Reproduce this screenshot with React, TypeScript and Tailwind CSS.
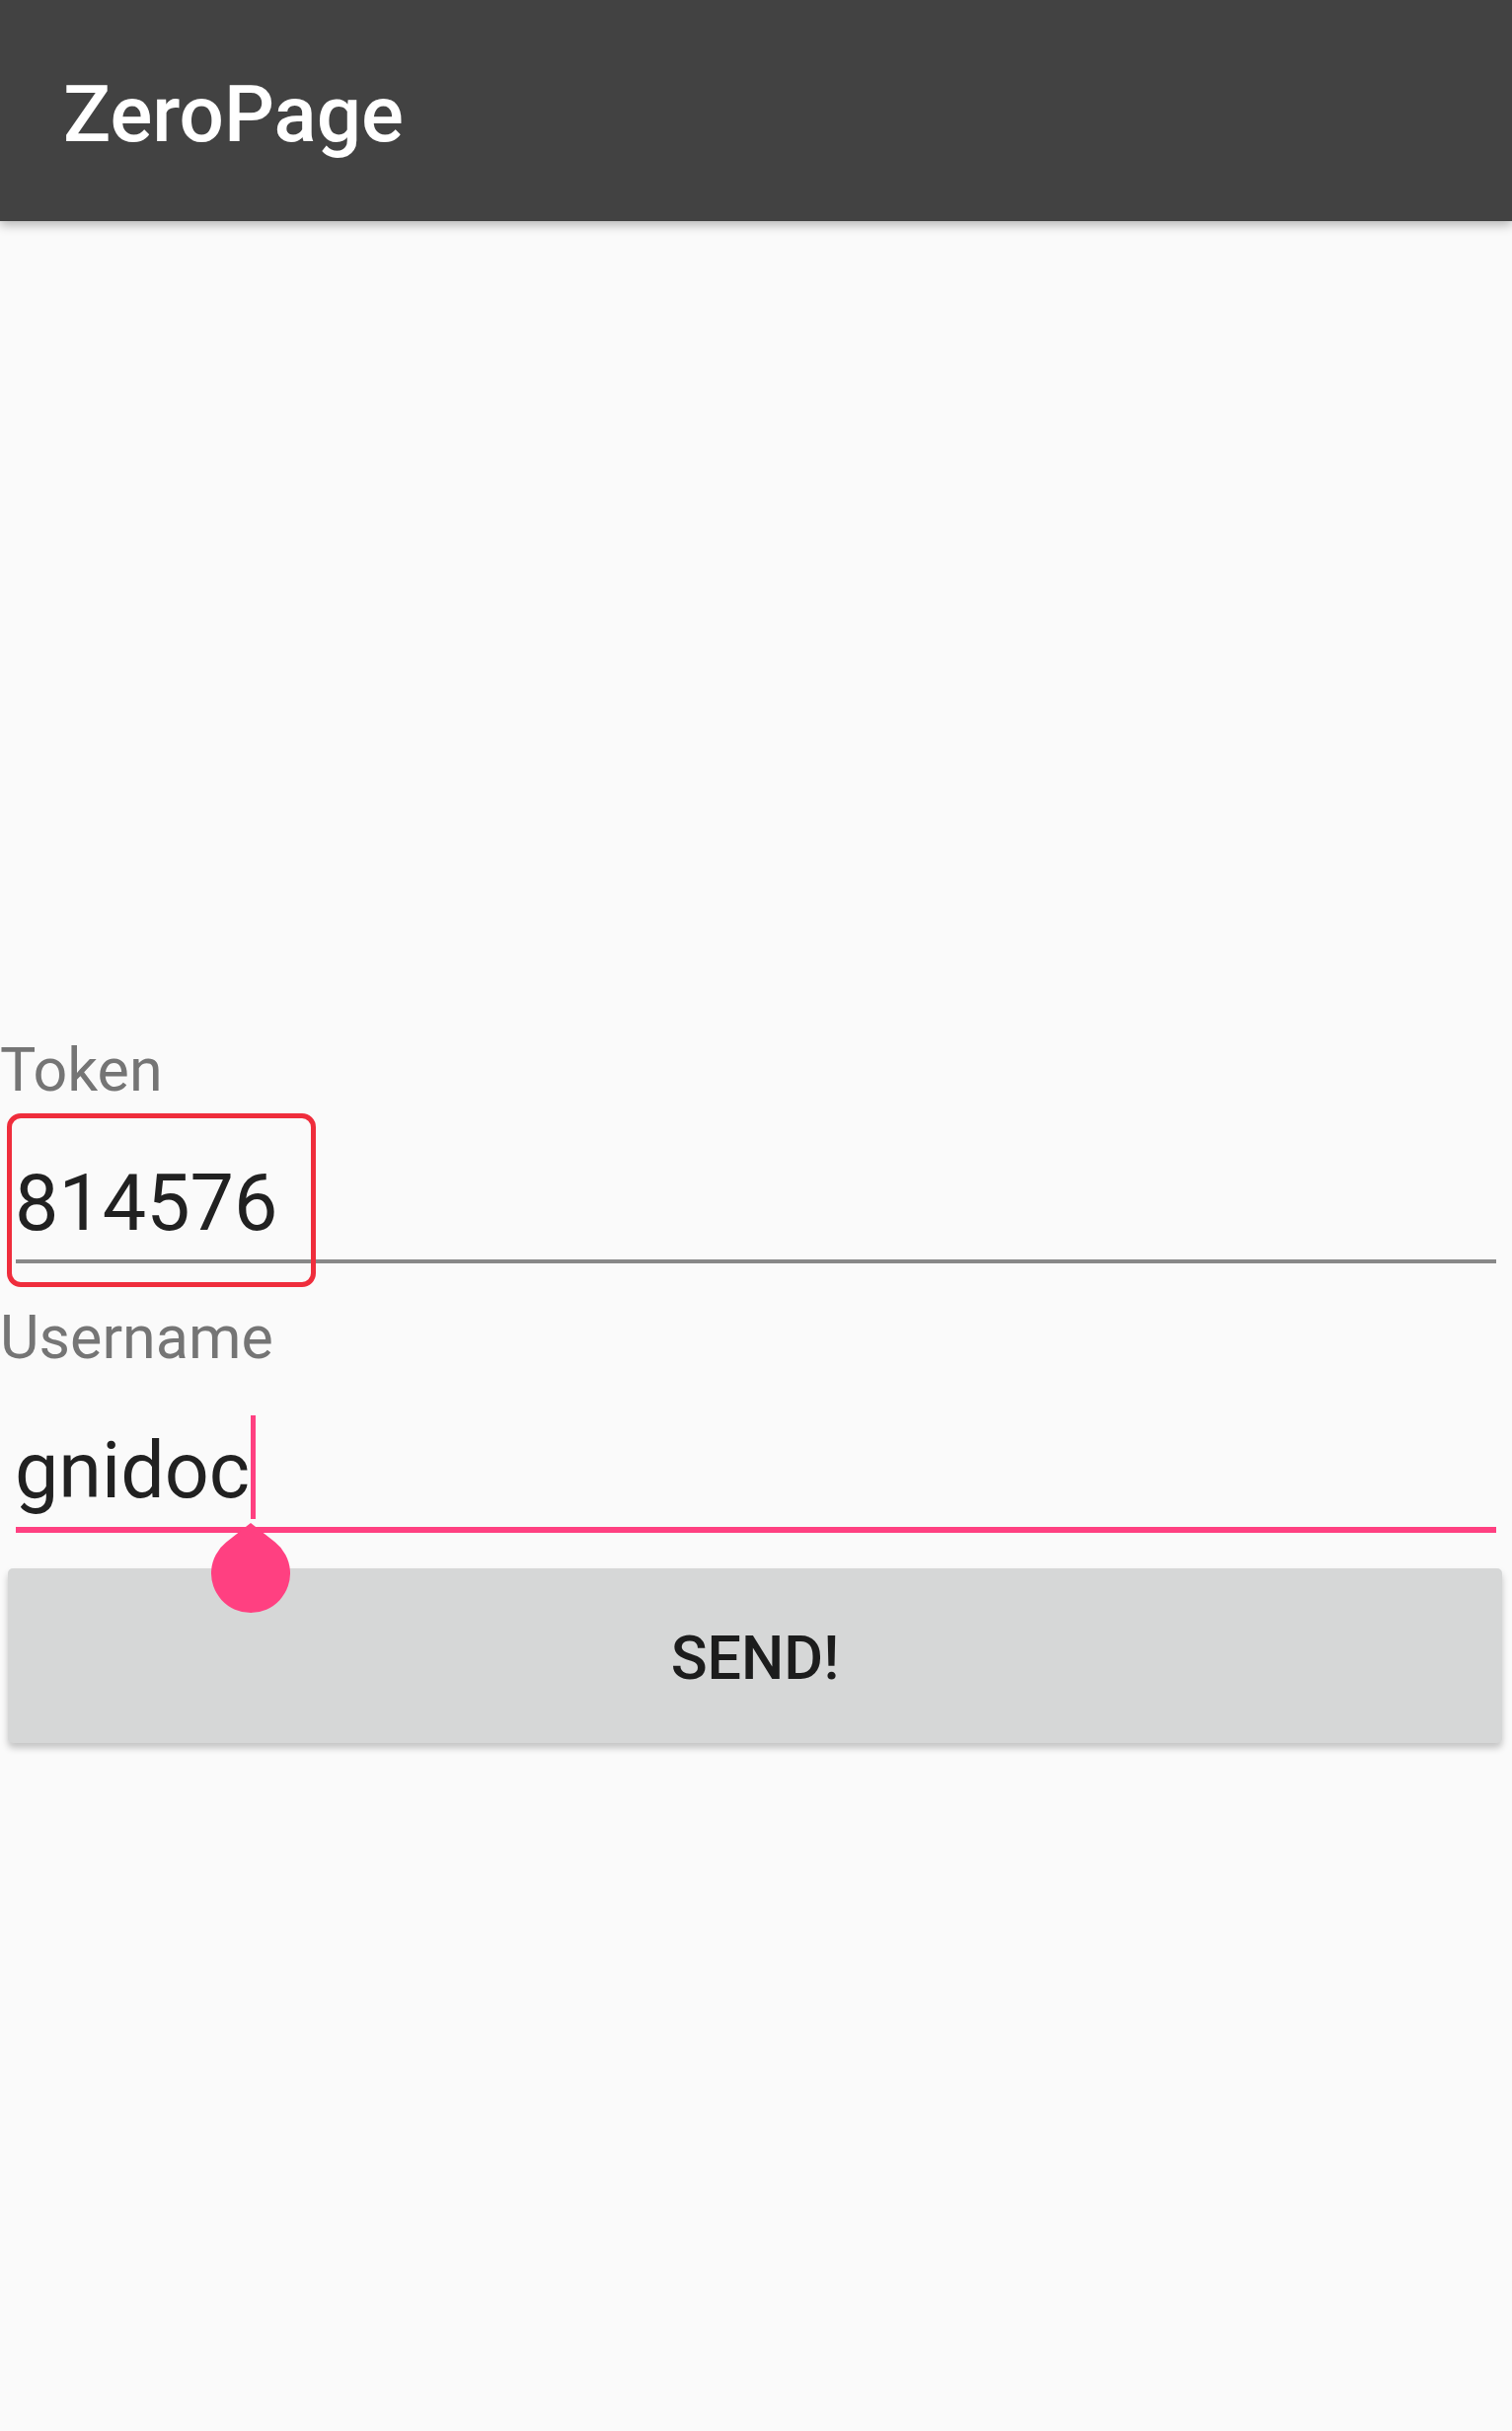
import React from "react";

const font = { fontFamily: "Roboto, 'Noto Sans', Arial, sans-serif" };

const Handle = () => (
  <svg width="80" height="91" viewBox="0 0 80 91" className="absolute z-20 left-[214px] top-[224px]">
    <path d="M40 0 L64.8 19.6 A40 40 0 1 1 15.2 19.6 Z" fill="#ff4081" />
  </svg>
);

const App = () => {
  return (
    <div className="w-[1532px] min-h-[2463px] bg-[#fafafa]" style={font}>
      <div className="h-[224px] bg-[#424242] shadow-[0_4px_10px_rgba(0,0,0,0.28)] relative z-10">
        <h1 className="pl-[64px] pt-[69px] text-[80px] leading-[94px] font-medium text-white">ZeroPage</h1>
      </div>

      <div className="pt-[824px]">
        {/* token field */}
        <div className="relative">
          <p className="text-[61px] leading-[73px] text-[#757575]">Token</p>
          <div className="mt-[51px] ml-[15px] h-[94px] text-[79px] leading-[94px] text-[#212121]">814576</div>
          <div className="mt-[10px] ml-[16px] w-[1500px] h-[4px] bg-[#888888]" />
          <div className="absolute left-[7px] top-[80px] w-[313px] h-[176px] border-[5px] border-[#ef2d3c] rounded-[14px]" />
        </div>

        {/* username field */}
        <div className="relative z-20 mt-[39px]">
          <p className="text-[61px] leading-[73px] text-[#757575]">Username</p>
          <div className="mt-[51px] ml-[15px] h-[94px] flex items-start text-[79px] leading-[94px] text-[#212121]">
            <span>gnidoc</span>
            <span className="w-[5px] h-[105px] -mt-[9px] ml-[1px] bg-[#ff4081]" />
          </div>
          <div className="mt-[10px] ml-[16px] w-[1500px] h-[6px] bg-[#ff4081]" />
          <Handle />
        </div>

        <div className="px-[8px] pt-[36px]">
          <button className="w-[1514px] h-[177px] rounded-[5px] bg-[#d6d7d7] shadow-[0_5px_7px_rgba(0,0,0,0.22)] pt-[6px] text-[61px] font-medium text-[#1c1c1c]">
            SEND!
          </button>
        </div>
      </div>
    </div>
  );
};

export default App;
